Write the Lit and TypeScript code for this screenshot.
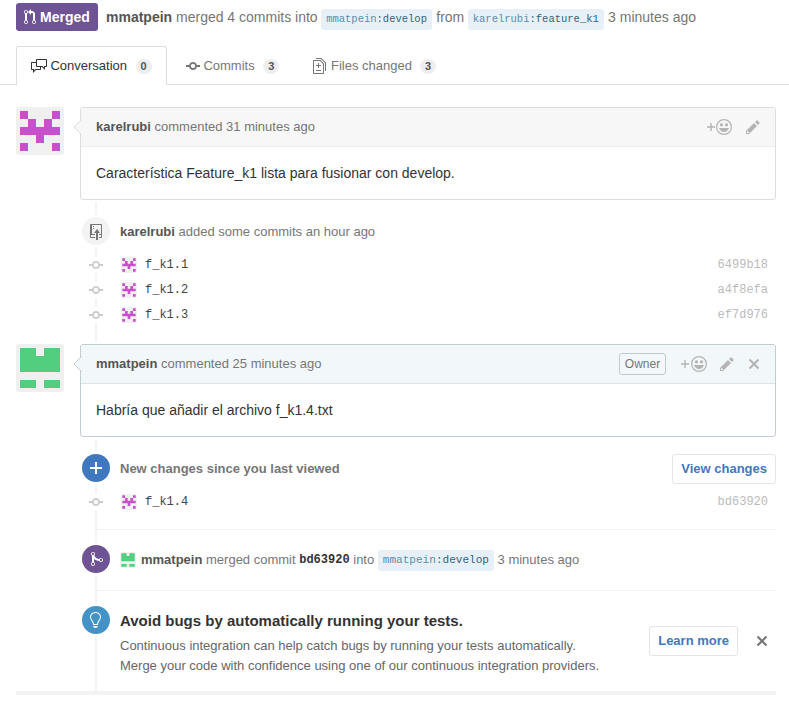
import { LitElement, html, css, nothing } from "lit";
import { customElement, property } from "lit/decorators.js";

type Glyph = { w: number; d: string };

const GLYPHS: Record<string, Glyph> = {
  pullRequest: { w: 12, d: "M11 11.28V5c-.03-.78-.34-1.47-.94-2.06C9.46 2.35 8.78 2.03 8 2H7V0L4 3l3 3V4h1c.27.02.48.11.69.31.21.2.3.42.31.69v6.28A1.993 1.993 0 0 0 10 15a1.993 1.993 0 0 0 1-3.72zm-1 2.92c-.66 0-1.2-.55-1.2-1.2 0-.65.55-1.2 1.2-1.2.65 0 1.2.55 1.2 1.2 0 .65-.55 1.2-1.2 1.2zM4 3c0-1.11-.89-2-2-2a1.993 1.993 0 0 0-1 3.72v6.56A1.993 1.993 0 0 0 2 15a1.993 1.993 0 0 0 1-3.72V4.72c.59-.34 1-.98 1-1.72zm-.8 10c0 .66-.55 1.2-1.2 1.2-.65 0-1.2-.55-1.2-1.2 0-.65.55-1.2 1.2-1.2.65 0 1.2.55 1.2 1.2zM2 4.2C1.34 4.2.8 3.65.8 3c0-.65.55-1.2 1.2-1.2.65 0 1.2.55 1.2 1.2 0 .65-.55 1.2-1.2 1.2z" },
  discussion: { w: 16, d: "M15 1H6c-.55 0-1 .45-1 1v2H1c-.55 0-1 .45-1 1v6c0 .55.45 1 1 1h1v3l3-3h4c.55 0 1-.45 1-1V9h1l3 3V9h1c.55 0 1-.45 1-1V2c0-.55-.45-1-1-1zM9 11H4.5L3 12.5V11H1V5h4v3c0 .55.45 1 1 1h3v2zm6-3h-2v1.5L11.5 8H6V2h9v6z" },
  commit: { w: 14, d: "M10.86 7c-.45-1.72-2-3-3.86-3-1.86 0-3.41 1.28-3.86 3H0v2h3.14c.45 1.72 2 3 3.86 3 1.86 0 3.41-1.28 3.86-3H14V7h-3.14zM7 10.2c-1.22 0-2.2-.98-2.2-2.2 0-1.22.98-2.2 2.2-2.2 1.22 0 2.2.98 2.2 2.2 0 1.22-.98 2.2-2.2 2.2z" },
  diff: { w: 13, d: "M6 7h2v1H6v2H5V8H3V7h2V5h1v2zm-3 6h5v-1H3v1zM7.5 2L11 5.5V15c0 .55-.45 1-1 1H1c-.55 0-1-.45-1-1V3c0-.55.45-1 1-1h6.5zM10 6L7 3H1v12h9V6zM8.5 0H3v1h5l4 4v8h1V4.5L8.5 0z" },
  pencil: { w: 14, d: "M0 12v3h3l8-8-3-3-8 8zm3 2H1v-2h1v1h1v1zm10.3-9.3L12 6 9 3l1.3-1.3a.996.996 0 0 1 1.41 0l1.59 1.59c.39.39.39 1.02 0 1.41z" },
  x: { w: 12, d: "M7.48 8l3.75 3.75-1.48 1.48L6 9.48l-3.75 3.75-1.48-1.48L4.52 8 .77 4.25l1.48-1.48L6 6.52l3.75-3.75 1.48 1.48z" },
  push: { w: 12, d: "M4 3H3V2h1v1zM3 5h1V4H3v1zm4 0L4 9h2v7h2V9h2L7 5zm4-5H1C.45 0 0 .45 0 1v12c0 .55.45 1 1 1h4v-1H1v-2h4v-1H2V1h9.02L11 10H9v1h2v2H9v1h2c.55 0 1-.45 1-1V1c0-.55-.45-1-1-1z" },
  plus: { w: 12, d: "M12 9H7v5H5V9H0V7h5V2h2v5h5z" },
  merge: { w: 12, d: "M10 7c-.73 0-1.38.41-1.73 1.02V8C7.22 7.98 6 7.64 5.14 6.98c-.75-.58-1.5-1.61-1.89-2.44A1.993 1.993 0 0 0 2 .99C.89.99 0 1.89 0 3a2 2 0 0 0 1 1.72v6.56c-.59.35-1 .99-1 1.72 0 1.11.89 2 2 2a1.993 1.993 0 0 0 1-3.72V7.67c.67.7 1.44 1.27 2.3 1.69.86.42 2.03.63 2.97.64v-.02c.36.61 1 1.02 1.73 1.02 1.11 0 2-.89 2-2 0-1.11-.89-2-2-2zm-6.8 6c0 .66-.55 1.2-1.2 1.2-.65 0-1.2-.55-1.2-1.2 0-.65.55-1.2 1.2-1.2.65 0 1.2.55 1.2 1.2zM2 4.2C1.34 4.2.8 3.65.8 3c0-.65.55-1.2 1.2-1.2.65 0 1.2.55 1.2 1.2 0 .65-.55 1.2-1.2 1.2zm8 6c-.66 0-1.2-.55-1.2-1.2 0-.65.55-1.2 1.2-1.2.65 0 1.2.55 1.2 1.2 0 .65-.55 1.2-1.2 1.2z" },
  bulb: { w: 14, d: "M6.5 0C3.48 0 1 2.19 1 5c0 .92.55 2.25 1 3 1.34 2.25 1.78 2.78 2 4v1h5v-1c.22-1.22.66-1.75 2-4 .45-.75 1-2.08 1-3 0-2.81-2.48-5-5.5-5zm3.64 7.48c-.25.44-.47.8-.67 1.11-.86 1.41-1.25 2.06-1.45 3.23-.02.05-.02.11-.02.17H5c0-.06 0-.13-.02-.17-.2-1.17-.59-1.83-1.45-3.23-.2-.31-.42-.67-.67-1.11C2.44 6.78 2 5.65 2 5c0-2.2 2.02-4 4.5-4 1.22 0 2.36.42 3.22 1.19C10.55 2.94 11 3.94 11 5c0 .66-.44 1.78-.86 2.48zM4 14h5c-.23 1.14-1.3 2-2.5 2s-2.27-.86-2.5-2z" },
  smiley: { w: 16, d: "M8 0a8 8 0 1 0 0 16A8 8 0 0 0 8 0zm0 1.21a6.79 6.79 0 1 1 0 13.58A6.79 6.79 0 0 1 8 1.21zM4 6.2v-.4C4 4.8 4.7 4.2 5.5 4.2S7 4.8 7 5.8v.4c0 .6-.5 1-1 1H5c-.5 0-1-.4-1-1zm5 0v-.4c0-1 .7-1.6 1.5-1.6s1.5.6 1.5 1.6v.4c0 .6-.5 1-1 1h-1c-.5 0-1-.4-1-1zM3 9h10c-.6 2-2.5 4-5 4S3.6 11 3 9z" },
};

const icon = (name: string) => {
  const g = GLYPHS[name];
  return html`<svg class="icon" width=${g.w} height="16" viewBox="0 0 ${g.w} 16"><path fill="currentColor" d=${g.d}></path></svg>`;
};

const USERS: Record<string, { color: string; rows: string[] }> = {
  karelrubi: { color: "#c850cb", rows: ["X...X", ".X.X.", "XXXXX", "..X..", "X...X"] },
  mmatpein: { color: "#52ce7f", rows: ["XX.XX", "XXXXX", "XXXXX", ".....", "XX.XX"] },
};

@customElement("user-avatar")
class UserAvatar extends LitElement {
  @property() user = "karelrubi";
  static styles = css`
    :host { display: block; width: 48px; height: 48px; border-radius: 3px; overflow: hidden; flex: none; background: #f0f0f0; }
    svg { display: block; width: 100%; height: 100%; }
  `;
  render() {
    const { color, rows } = USERS[this.user];
    const d = rows
      .flatMap((row, y) => [...row].map((c, x) => (c === "X" ? `M${4 + x * 8} ${4 + y * 8}h8v8h-8z` : "")))
      .join("");
    return html`<svg viewBox="0 0 48 48"><path d=${d} fill=${color}></path></svg>`;
  }
}

@customElement("app-root")
class AppRoot extends LitElement {
  static styles = css`
    :host { display: block; height: 704px; overflow: hidden; background: #fff; color: #767676;
      font: 13px/20px "Liberation Sans", Arial, sans-serif; }
    * { box-sizing: border-box; }
    .icon { display: block; flex: none; }
    b { color: #555; }
    .mono, .ref { font-family: "Liberation Mono", monospace; }

    .meta { display: flex; align-items: center; height: 28px; margin: 3px 0 0 16px; font-size: 14px; white-space: pre; }
    .state { display: flex; align-items: center; gap: 4px; width: 82px; height: 28px; padding-left: 8px;
      margin-right: 8px; border-radius: 3px; background: #6e5494; color: #fff; font-weight: bold; }
    .ref { display: inline-block; padding: 0 5px; border-radius: 3px; background: #e7f0f7; color: #336479;
      font-size: 10.5px; line-height: 21px; }
    .ref i { font-style: normal; color: #5b8eaa; }
    .meta .ref { margin: 5px 0.4px 0 -0.4px; }

    .tabs { display: flex; height: 39px; margin-top: 15px; padding-left: 16px; border-bottom: 1px solid #ddd; }
    .tab { display: flex; align-items: center; height: 39px; padding-left: 16px; }
    .tab.on { width: 151px; padding-left: 14px; border: 1px solid #ddd; border-bottom: 0; border-radius: 3px 3px 0 0;
      background: #fff; color: #333; }
    .tab.second { padding-left: 19px; width: 130px; }
    .tab .icon { margin-right: 3.4px; }
    .tab.third .icon { margin-right: 5px; }
    .tab.third .count { margin-left: 8px; }
    .count { margin: 1px 0 0 8.6px; min-width: 16px; height: 15px; border-radius: 8px; background: #eee; color: #555;
      font-size: 11px; font-weight: bold; line-height: 15px; text-align: center; }

    .timeline { position: relative; width: 760px; height: 588px; margin: 22px 0 0 16px; border-bottom: 4px solid #f3f3f3; }
    .timeline::before { content: ""; position: absolute; left: 79px; top: 0; bottom: 0; width: 2px; background: #f3f3f3; }
    .timeline > * { position: relative; }

    .comment { display: flex; justify-content: space-between; height: 93px; }
    .bubble { position: relative; width: 696px; border: 1px solid #ddd; border-radius: 3px; background: #fff;
      box-shadow: 0 2px 0 #fff, 0 -2px 0 #fff; }
    .head { display: flex; align-items: center; justify-content: space-between; height: 39px; padding: 0 15px;
      background: #f7f7f7; border-bottom: 1px solid #eee; border-radius: 2px 2px 0 0; }
    .caret { position: absolute; left: -8px; top: 11px; display: block; }
    .caret path { fill: #f7f7f7; stroke: #ddd; }
    .own .bubble { border-color: #bfccd1; }
    .own .head { background: #f2f8fa; border-color: #dde4e6; }
    .own .caret path { fill: #f2f8fa; stroke: #bfccd1; }
    .body { padding: 16px 15px; color: #333; font-size: 14px; }
    .tools { display: flex; align-items: center; color: #b4b4b4; }
    .react { display: flex; align-items: center; gap: 1px; margin-right: 14px; }
    .own .react { gap: 2px; margin-right: 13px; }
    .tools .icon + .icon { margin-left: 14px; }
    .react .icon + .icon { margin-left: 0; }
    .label { width: 47px; height: 22px; margin-right: 15px; border: 1px solid #bfccd1; border-radius: 3px; color: #767676;
      font-size: 12px; line-height: 20px; text-align: center; }

    .push { height: 144px; padding-top: 17px; }
    .fresh { height: 92px; padding-top: 17px; }
    .event { display: flex; align-items: center; height: 28px; margin-left: 66px; white-space: pre; }
    .what { display: flex; align-items: center; margin-top: 2px; }
    .badge { display: flex; align-items: center; justify-content: center; flex: none; width: 28px; height: 28px;
      margin-right: 10px; border-radius: 50%; background: #f3f3f3; color: #767676; box-shadow: 0 0 0 2px #fff; }
    .badge.blue { background: #4078c0; color: #fff; }
    .badge.purple { background: #6e5494; color: #fff; padding-left: 2px; }
    .badge.sky { background: #4393c7; color: #fff; }
    .push .badge { padding-top: 2px; }
    .fresh b { color: #767676; }
    .rows { margin: 7px 8px 0 64px; }
    .row { display: flex; align-items: center; height: 25px; font-size: 12px; }
    .dot { display: flex; justify-content: center; width: 32px; margin: 1px 9px 0 0; background: #fff; color: #ccc; }
    .row user-avatar { width: 16px; height: 16px; margin: 1px 8px 0 0; border-radius: 2px; }
    .row .mono { color: #444; }
    .row .hash { margin-left: auto; color: #bbb; }
    .btn { height: 30px; padding: 0 8px; border: 1px solid #e5e5e5; border-radius: 3px; background: #fff; color: #4078c0;
      font-weight: bold; line-height: 28px; }
    .fresh .btn { margin: 2px 0 0 auto; }

    .line { height: 1px; margin-left: 81px; background: #f3f3f3; }
    .merged { height: 60px; padding-top: 15px; }
    .merged user-avatar { width: 16px; height: 16px; margin: 0 5px 0 0; border-radius: 2px; }
    .merged .ref { font-size: 11.05px; margin-top: 1px; }
    .merged .sha { font-size: 12px; color: #333; }
    .ci { display: flex; height: 100px; padding: 15px 8px 0 66px; }
    .ci h3 { margin: 5px 0 5px; color: #333; font-size: 15px; line-height: 20px; }
    .ci p { margin: 0; color: #666; }
    .ci .btn { margin: 20px 18px 0 auto; }
    .ci > .icon { margin-top: 27px; }
  `;

  private ref(owner: string, branch: string) {
    return html`<span class="ref"><i>${owner}</i>:${branch}</span>`;
  }

  private comment(user: string, when: string, text: string, own = false) {
    return html`<article class="comment ${own ? "own" : ""}">
      <user-avatar user=${user}></user-avatar>
      <div class="bubble">
        <div class="head">
          <svg class="caret" width="9" height="16" viewBox="0 0 9 16"><path d="M8.5 0.5L1 8L8.5 15.5"></path></svg>
          <span><b>${user}</b> commented ${when}</span>
          <div class="tools">
            ${own ? html`<span class="label">Owner</span>` : nothing}
            <span class="react">
              <svg class="icon" width="8" height="8" viewBox="0 0 8 8"><path fill="currentColor" d="M3.3 0h1.4v3.3H8v1.4H4.7V8H3.3V4.7H0V3.3h3.3z"></path></svg>
              ${icon("smiley")}
            </span>
            ${icon("pencil")}${own ? icon("x") : nothing}
          </div>
        </div>
        <div class="body">${text}</div>
      </div>
    </article>`;
  }

  private commits(list: [string, string][]) {
    return html`<div class="rows">${list.map(([name, hash]) => html`<div class="row">
      <span class="dot">${icon("commit")}</span><user-avatar user="karelrubi"></user-avatar>
      <span class="mono">${name}</span><span class="mono hash">${hash}</span>
    </div>`)}</div>`;
  }

  render() {
    return html`
      <div class="meta"><span class="state">${icon("pullRequest")}Merged</span><b>mmatpein</b><span> merged 4 commits into </span>${this.ref("mmatpein", "develop")}<span> from </span>${this.ref("karelrubi", "feature_k1")}<span> 3 minutes ago</span></div>
      <nav class="tabs">
        <div class="tab on">${icon("discussion")}Conversation<span class="count">0</span></div>
        <div class="tab second">${icon("commit")}Commits<span class="count">3</span></div>
        <div class="tab third">${icon("diff")}Files changed<span class="count">3</span></div>
      </nav>
      <main class="timeline">
        ${this.comment("karelrubi", "31 minutes ago", "Característica Feature_k1 lista para fusionar con develop.")}
        <section class="push">
          <div class="event"><span class="badge">${icon("push")}</span><div class="what"><b>karelrubi</b><span> added some commits an hour ago</span></div></div>
          ${this.commits([["f_k1.1", "6499b18"], ["f_k1.2", "a4f8efa"], ["f_k1.3", "ef7d976"]])}
        </section>
        ${this.comment("mmatpein", "25 minutes ago", "Habría que añadir el archivo f_k1.4.txt", true)}
        <section class="fresh">
          <div class="event"><span class="badge blue">${icon("plus")}</span><div class="what"><b>New changes since you last viewed</b></div><span class="btn">View changes</span></div>
          ${this.commits([["f_k1.4", "bd63920"]])}
        </section>
        <div class="line"></div>
        <section class="merged">
          <div class="event"><span class="badge purple">${icon("merge")}</span><div class="what"><user-avatar user="mmatpein"></user-avatar><b>mmatpein</b><span> merged commit </span><b class="mono sha">bd63920</b><span> into </span>${this.ref("mmatpein", "develop")}<span> 3 minutes ago</span></div></div>
        </section>
        <div class="line"></div>
        <section class="ci">
          <span class="badge sky">${icon("bulb")}</span>
          <div>
            <h3>Avoid bugs by automatically running your tests.</h3>
            <p>Continuous integration can help catch bugs by running your tests automatically.</p>
            <p>Merge your code with confidence using one of our continuous integration providers.</p>
          </div>
          <span class="btn">Learn more</span>${icon("x")}
        </section>
      </main>`;
  }
}
